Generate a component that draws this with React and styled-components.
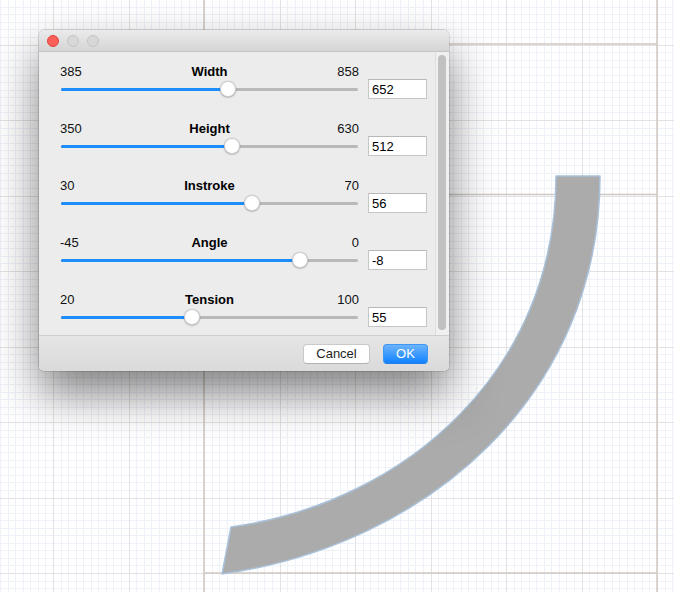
import React from 'react';
import styled, {createGlobalStyle} from 'styled-components';

const FONT = '"Liberation Sans", Arial, Helvetica, sans-serif';

// glyph editor canvas: grid origin sits on the left sidebearing / baseline
const GRID = {ox: 204, oy: 573, step: 7.55, width: 674, height: 592};
const METRICS = {left: 204, right: 657, lines: [44, 194.5, 573]};

const PARAMS = [
  {name: 'Width', min: 385, max: 858, value: 652},
  {name: 'Height', min: 350, max: 630, value: 512},
  {name: 'Instroke', min: 30, max: 70, value: 56},
  {name: 'Angle', min: -45, max: 0, value: -8},
  {name: 'Tension', min: 20, max: 100, value: 55},
];

const GlobalStyle = createGlobalStyle`
  html, body {
    margin: 0;
    padding: 0;
    background: #fff;
  }
  body {
    font-family: ${FONT};
    -webkit-font-smoothing: antialiased;
  }
`;

const Desktop = styled.div`
  position: relative;
  width: 674px;
  height: 592px;
  overflow: hidden;
  background: #fff;
`;

const CanvasArt = styled.svg`
  position: absolute;
  inset: 0;
  display: block;
`;

const Window = styled.div`
  position: absolute;
  left: 39px;
  top: 30px;
  width: 410px;
  height: 341px;
  display: flex;
  flex-direction: column;
  background: #ececec;
  border-radius: 5px;
  overflow: hidden;
  box-shadow: 0 0 0 0.5px rgba(0, 0, 0, 0.22), 0 22px 46px rgba(0, 0, 0, 0.5);
`;

const TitleBar = styled.div`
  height: 21px;
  flex: none;
  display: flex;
  align-items: center;
  gap: 8px;
  padding-left: 8px;
  background: linear-gradient(#ebebeb, #d5d5d5);
  border-bottom: 1px solid #c4c4c4;
`;

const Light = styled.span`
  width: 12px;
  height: 12px;
  box-sizing: border-box;
  border-radius: 50%;
  background: ${({$close}) => ($close ? '#fc5f57' : '#d8d8d8')};
  border: 1px solid ${({$close}) => ($close ? '#df4843' : '#c3c3c3')};
`;

const Body = styled.div`
  flex: 1;
  display: flex;
  min-height: 0;
`;

const Panel = styled.div`
  width: 396px;
  box-sizing: border-box;
  padding: 11px 8px 0 21px;
  display: flex;
  flex-direction: column;
  gap: 21px;
`;

const Row = styled.div`
  display: grid;
  grid-template-columns: 299px 59px;
  grid-template-rows: 16px 20px;
  column-gap: 9px;
`;

const Labels = styled.div`
  grid-column: 1;
  grid-row: 1;
  display: grid;
  grid-template-columns: 1fr auto 1fr;
  padding-top: 1px;
  font-size: 13px;
  line-height: 16px;
  color: #111;
`;

const Bound = styled.span`
  justify-self: ${({$end}) => ($end ? 'end' : 'start')};
`;

const Name = styled.span`
  font-weight: bold;
  color: #000;
`;

const Slider = styled.div`
  grid-column: 1;
  grid-row: 2;
  display: flex;
  align-items: center;
  padding: 0 1px;
`;

const Track = styled.div`
  position: relative;
  flex: 1;
  height: 3px;
  border-radius: 2px;
  background: #b9b9b9;
`;

const Fill = styled.div`
  height: 100%;
  border-radius: 2px;
  background: #1c8cff;
`;

const Knob = styled.div`
  position: absolute;
  top: 50%;
  width: 16px;
  height: 16px;
  box-sizing: border-box;
  border-radius: 50%;
  background: #fff;
  border: 0.5px solid rgba(0, 0, 0, 0.18);
  box-shadow: 0 0.5px 1.5px rgba(0, 0, 0, 0.35);
  transform: translate(-50%, -50%);
`;

const Field = styled.input`
  grid-column: 2;
  grid-row: 2;
  width: 59px;
  height: 20px;
  box-sizing: border-box;
  margin: 0;
  padding: 0 3px;
  border: 1px solid #c6c6c6;
  border-top-color: #b8b8b8;
  background: #fff;
  font-family: ${FONT};
  font-size: 13px;
  color: #000;
  outline: none;
`;

const ScrollTrack = styled.div`
  width: 14px;
  box-sizing: border-box;
  display: flex;
  padding: 3px 3px 5px 2px;
  background: #f0f0f0;
  border-left: 1px solid #dedede;
`;

const Thumb = styled.div`
  flex: 1;
  border-radius: 4px;
  background: #c1c1c1;
`;

const Footer = styled.div`
  height: 35px;
  flex: none;
  display: flex;
  align-items: center;
  justify-content: flex-end;
  gap: 13px;
  padding-right: 21px;
  border-top: 1px solid #cfcfcf;
  background: linear-gradient(#e5e5e5, #dadada);
`;

const Button = styled.button`
  height: 20px;
  width: ${({$primary}) => ($primary ? '45px' : '67px')};
  box-sizing: border-box;
  margin: 0;
  padding: 0;
  border-radius: 4px;
  font-family: ${FONT};
  font-size: 13px;
  line-height: 18px;
  color: ${({$primary}) => ($primary ? '#fff' : '#1d1d1d')};
  background: ${({$primary}) =>
    $primary ? 'linear-gradient(#6cb3fb, #1183ff)' : '#fff'};
  border: 1px solid ${({$primary}) => ($primary ? '#3f96f5' : '#c9c9c9')};
  border-bottom-color: ${({$primary}) => ($primary ? '#2a7fe6' : '#b3b3b3')};
`;

const snap = (v) => Math.round(v) + 0.5;

const gridLines = () => {
  const {ox, oy, step, width, height} = GRID;
  const lines = [];
  for (let k = Math.ceil(-ox / step); ox + k * step <= width; k++) {
    const x = snap(ox + k * step);
    lines.push({key: `v${k}`, x1: x, y1: 0, x2: x, y2: height, major: k % 10 === 0});
  }
  for (let k = Math.ceil(-oy / step); oy + k * step <= height; k++) {
    const y = snap(oy + k * step);
    lines.push({key: `h${k}`, x1: 0, y1: y, x2: width, y2: y, major: k % 10 === 0});
  }
  return lines;
};

const ARC =
  'M556 176 L600 176 C600 395 428 545 222 574 L231 527 C408 502 556 369 556 176 Z';

const Canvas = () => (
  <CanvasArt width="674" height="592" viewBox="0 0 674 592">
    <g shapeRendering="crispEdges">
      {gridLines()
        .sort((a, b) => a.major - b.major)
        .map(({key, major, ...l}) => (
          <line key={key} {...l} stroke={major ? '#e2e2e4' : '#eff1f8'} strokeWidth="1" />
        ))}
    </g>
    <g stroke="#d0c9c3" strokeWidth="1.5">
      <line x1={METRICS.left} y1="0" x2={METRICS.left} y2="592" />
      <line x1={METRICS.right} y1="0" x2={METRICS.right} y2="592" />
      {METRICS.lines.map((y) => (
        <line key={y} x1={METRICS.left} y1={y} x2={METRICS.right} y2={y} />
      ))}
    </g>
    <path d={ARC} fill="#ababab" stroke="#a9c1da" strokeWidth="1.5" strokeLinejoin="round" />
  </CanvasArt>
);

const ParamRow = ({name, min, max, value}) => {
  const frac = (value - min) / (max - min);
  const pos = `calc(8px + (100% - 16px) * ${frac})`;
  return (
    <Row>
      <Labels>
        <Bound>{min}</Bound>
        <Name>{name}</Name>
        <Bound $end>{max}</Bound>
      </Labels>
      <Slider>
        <Track>
          <Fill style={{width: pos}} />
          <Knob style={{left: pos}} />
        </Track>
      </Slider>
      <Field readOnly value={value} />
    </Row>
  );
};

const App = () => (
  <Desktop>
    <GlobalStyle />
    <Canvas />
    <Window>
      <TitleBar>
        <Light $close />
        <Light />
        <Light />
      </TitleBar>
      <Body>
        <Panel>
          {PARAMS.map((p) => (
            <ParamRow key={p.name} {...p} />
          ))}
        </Panel>
        <ScrollTrack>
          <Thumb />
        </ScrollTrack>
      </Body>
      <Footer>
        <Button>Cancel</Button>
        <Button $primary>OK</Button>
      </Footer>
    </Window>
  </Desktop>
);

export default App;
